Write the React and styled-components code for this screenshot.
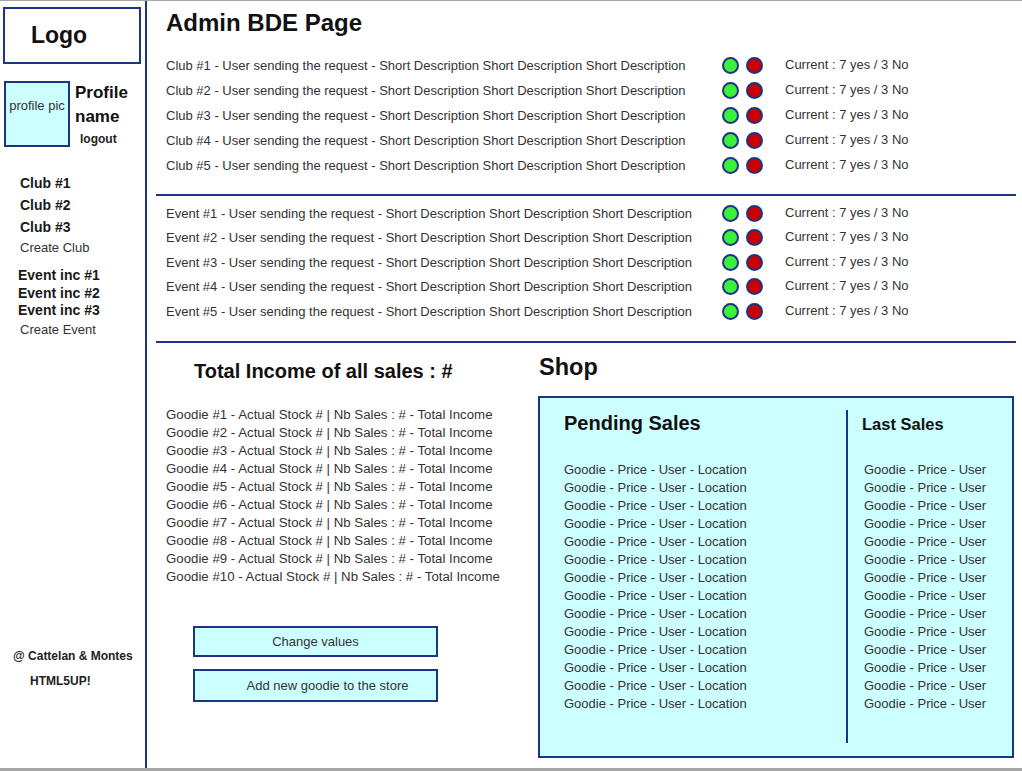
import React from 'react';
import styled, { createGlobalStyle } from 'styled-components';

const NAVY = '#1d3483';
const CYAN = '#ccffff';

const GlobalStyle = createGlobalStyle`
  html, body {
    margin: 0;
    padding: 0;
    background: #fff;
  }
  body {
    font-family: "Liberation Sans", Arial, sans-serif;
    color: #333;
  }
`;

const Page = styled.div`
  display: flex;
  width: 1022px;
  height: 771px;
  box-sizing: border-box;
  border-top: 1px solid #a6a6a6;
  border-bottom: 3px solid #a6a6a6;
  overflow: hidden;
`;

/* ---------- sidebar ---------- */

const Sidebar = styled.aside`
  width: 147px;
  flex-shrink: 0;
  box-sizing: border-box;
  border-right: 2px solid ${NAVY};
  display: flex;
  flex-direction: column;
  padding: 6px 0 0 3px;
`;

const LogoBox = styled.div`
  width: 138px;
  height: 57px;
  box-sizing: border-box;
  border: 2px solid ${NAVY};
  padding-right: 26px;
  display: flex;
  align-items: center;
  justify-content: center;
  font-size: 23px;
  font-weight: bold;
  color: #111;
`;

const Profile = styled.div`
  display: flex;
  gap: 5px;
  margin-top: 17px;
`;

const ProfilePic = styled.div`
  width: 66px;
  height: 66px;
  margin-left: 1px;
  box-sizing: border-box;
  border: 2px solid ${NAVY};
  background: ${CYAN};
  padding-top: 15px;
  text-align: center;
  font-size: 13px;
  line-height: 15px;
  color: #333;
`;

const ProfileInfo = styled.div`
  display: flex;
  flex-direction: column;
`;

const ProfileName = styled.div`
  font-size: 17px;
  font-weight: bold;
  line-height: 24px;
  color: #111;
`;

const Logout = styled.div`
  margin: 3px 0 0 5px;
  font-size: 12px;
  font-weight: bold;
  line-height: 14px;
  color: #222;
`;

const NavGroup = styled.nav`
  display: flex;
  flex-direction: column;
  margin-top: ${p => p.$top}px;
  padding-left: 17px;
`;

const NavItem = styled.div`
  font-size: ${p => (p.$bold ? 14 : 13)}px;
  font-weight: ${p => (p.$bold ? 'bold' : 'normal')};
  line-height: ${p => p.$lh}px;
  margin-left: ${p => p.$shift || 0}px;
  color: ${p => (p.$bold ? '#1a1a1a' : '#333')};
`;

const SideFooter = styled.div`
  margin-top: auto;
  padding: 0 0 80px 10px;
  font-size: 12px;
  font-weight: bold;
  line-height: 14px;
  color: #222;
`;

const FooterLine = styled.div`
  margin-top: ${p => p.$top || 0}px;
  margin-left: ${p => p.$indent || 0}px;
`;

/* ---------- main ---------- */

const Main = styled.main`
  flex: 1;
  display: flex;
  flex-direction: column;
  padding: 8px 6px 0 9px;
`;

const PageTitle = styled.h1`
  margin: 0 0 0 10px;
  font-size: 24px;
  line-height: 28px;
  font-weight: bold;
  color: #111;
`;

const RequestList = styled.div`
  display: flex;
  flex-direction: column;
  margin-top: ${p => p.$top}px;
`;

const RequestRow = styled.div`
  display: flex;
  align-items: center;
  height: ${p => p.$h}px;
  padding-left: 10px;
  font-size: 13px;
  color: #333;
`;

const RequestText = styled.div`
  width: 556px;
  white-space: nowrap;
`;

const Votes = styled.div`
  display: flex;
  gap: 7px;
`;

const Dot = styled.span`
  width: 17px;
  height: 17px;
  box-sizing: border-box;
  border-radius: 50%;
  border: 2px solid ${NAVY};
  background: ${p => p.$color};
`;

const Current = styled.div`
  margin: -2px 0 0 22px;
  white-space: nowrap;
`;

const Divider = styled.hr`
  margin: ${p => p.$top}px 0 0;
  border: 0;
  height: 2px;
  background: ${NAVY};
`;

const Bottom = styled.section`
  display: flex;
`;

const IncomeCol = styled.div`
  width: 382px;
  display: flex;
  flex-direction: column;
`;

const IncomeTitle = styled.h2`
  margin: 17px 0 0 38px;
  font-size: 20px;
  line-height: 23px;
  font-weight: bold;
  color: #111;
`;

const Lines = styled.div`
  display: flex;
  flex-direction: column;
  margin: ${p => p.$top || 0}px 0 0 ${p => p.$left || 0}px;
  font-size: ${p => p.$size || 13}px;
  line-height: 18px;
  color: #333;
  white-space: nowrap;
`;

const Buttons = styled.div`
  display: flex;
  flex-direction: column;
  gap: 12px;
  margin: 40px 0 0 37px;
`;

const ActionButton = styled.button`
  width: 245px;
  height: ${p => p.$h}px;
  box-sizing: border-box;
  border: 2px solid ${NAVY};
  background: ${CYAN};
  padding: 0 0 0 ${p => p.$offset || 0}px;
  font-family: inherit;
  font-size: 13px;
  color: #333;
  text-align: center;
`;

const ShopCol = styled.div`
  width: 476px;
  display: flex;
  flex-direction: column;
`;

const ShopTitle = styled.h2`
  margin: 11.5px 0 0 1px;
  font-size: 23.5px;
  line-height: 27px;
  font-weight: bold;
  color: #111;
`;

const ShopBox = styled.div`
  margin-top: 14.5px;
  height: 362px;
  box-sizing: border-box;
  border: 2px solid ${NAVY};
  background: ${CYAN};
  display: flex;
`;

const SalesCol = styled.div`
  display: flex;
  flex-direction: column;
  box-sizing: border-box;
  width: ${p => p.$w || 'auto'};
  flex: ${p => (p.$w ? 'none' : 1)};
  padding-left: ${p => p.$pad}px;
`;

const SalesHead = styled.h3`
  height: 63px;
  box-sizing: border-box;
  margin: 0 0 0 ${p => p.$shift || 0}px;
  padding-top: ${p => p.$top}px;
  font-size: ${p => p.$size}px;
  line-height: ${p => p.$lh}px;
  font-weight: bold;
  color: #111;
`;

const VRule = styled.div`
  width: 2px;
  margin: 12px 0 13px;
  background: ${NAVY};
`;

const desc = 'Short Description Short Description Short Description';
const clubs = [1, 2, 3, 4, 5].map(n => `Club #${n} - User sending the request - ${desc}`);
const events = [1, 2, 3, 4, 5].map(n => `Event #${n} - User sending the request - ${desc}`);
const goodies = Array.from({ length: 10 }, (_, i) => `Goodie #${i + 1} - Actual Stock # | Nb Sales : # - Total Income`);
const pending = Array.from({ length: 14 }, () => 'Goodie - Price - User - Location');
const last = Array.from({ length: 14 }, () => 'Goodie - Price - User');

const Requests = ({ items, top, rowHeight }) => (
  <RequestList $top={top}>
    {items.map(text => (
      <RequestRow key={text} $h={rowHeight}>
        <RequestText>{text}</RequestText>
        <Votes>
          <Dot $color="#3cf03c" />
          <Dot $color="#cc0000" />
        </Votes>
        <Current>Current : 7 yes / 3 No</Current>
      </RequestRow>
    ))}
  </RequestList>
);

export default function App() {
  return (
    <>
      <GlobalStyle />
      <Page>
        <Sidebar>
          <LogoBox>Logo</LogoBox>
          <Profile>
            <ProfilePic>profile pic</ProfilePic>
            <ProfileInfo>
              <ProfileName>Profile<br />name</ProfileName>
              <Logout>logout</Logout>
            </ProfileInfo>
          </Profile>

          <NavGroup $top={25}>
            <NavItem $bold $lh={22}>Club #1</NavItem>
            <NavItem $bold $lh={22}>Club #2</NavItem>
            <NavItem $bold $lh={22}>Club #3</NavItem>
            <NavItem $lh={20}>Create Club</NavItem>
          </NavGroup>

          <NavGroup $top={9}>
            <NavItem $bold $lh={17.5} $shift={-2}>Event inc #1</NavItem>
            <NavItem $bold $lh={17.5} $shift={-2}>Event inc #2</NavItem>
            <NavItem $bold $lh={17.5} $shift={-2}>Event inc #3</NavItem>
            <NavItem $lh={20}>Create Event</NavItem>
          </NavGroup>

          <SideFooter>
            <FooterLine>@ Cattelan &amp; Montes</FooterLine>
            <FooterLine $top={11} $indent={17}>HTML5UP!</FooterLine>
          </SideFooter>
        </Sidebar>

        <Main>
          <PageTitle>Admin BDE Page</PageTitle>
          <Requests items={clubs} top={16} rowHeight={25} />
          <Divider $top={16} />
          <Requests items={events} top={5} rowHeight={24.5} />
          <Divider $top={17} />

          <Bottom>
            <IncomeCol>
              <IncomeTitle>Total Income of all sales : #</IncomeTitle>
              <Lines $top={23} $left={10} $size={13.25}>
                {goodies.map(g => <div key={g}>{g}</div>)}
              </Lines>
              <Buttons>
                <ActionButton $h={31}>Change values</ActionButton>
                <ActionButton $h={33} $offset={24}>Add new goodie to the store</ActionButton>
              </Buttons>
            </IncomeCol>

            <ShopCol>
              <ShopTitle>Shop</ShopTitle>
              <ShopBox>
                <SalesCol $w="306px" $pad={24}>
                  <SalesHead $top={14.5} $size={20} $lh={23}>Pending Sales</SalesHead>
                  <Lines>
                    {pending.map((p, i) => <div key={i}>{p}</div>)}
                  </Lines>
                </SalesCol>
                <VRule />
                <SalesCol $pad={16}>
                  <SalesHead $top={17} $size={16.5} $lh={19} $shift={-2}>Last Sales</SalesHead>
                  <Lines>
                    {last.map((l, i) => <div key={i}>{l}</div>)}
                  </Lines>
                </SalesCol>
              </ShopBox>
            </ShopCol>
          </Bottom>
        </Main>
      </Page>
    </>
  );
}
